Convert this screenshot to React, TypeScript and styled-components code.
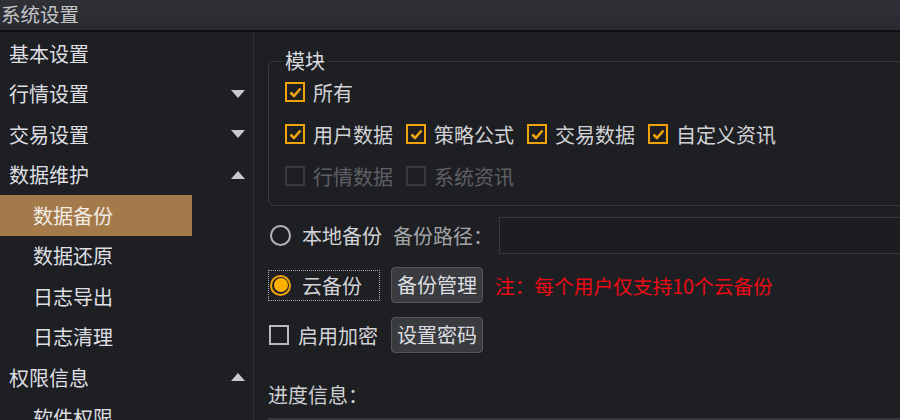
import styled, { createGlobalStyle } from 'styled-components';

const GlobalStyle = createGlobalStyle`
  html, body {
    margin: 0;
    padding: 0;
    background: #1e1f23;
  }
  * {
    box-sizing: border-box;
  }
`;

const FONT = `"Noto Sans CJK SC", "Noto Sans", sans-serif`;
const ORANGE = '#f0a30a';

interface NavItemProp {
  label: string,
  level: number,
  arrow?: 'up' | 'down',
  selected?: boolean
}

const navItems: NavItemProp[] = [
  { label: '基本设置', level: 1 },
  { label: '行情设置', level: 1, arrow: 'down' },
  { label: '交易设置', level: 1, arrow: 'down' },
  { label: '数据维护', level: 1, arrow: 'up' },
  { label: '数据备份', level: 2, selected: true },
  { label: '数据还原', level: 2 },
  { label: '日志导出', level: 2 },
  { label: '日志清理', level: 2 },
  { label: '权限信息', level: 1, arrow: 'up' },
  { label: '软件权限', level: 2 },
];

const Window = styled.div`
  width: 900px;
  height: 420px;
  overflow: hidden;
  display: flex;
  flex-direction: column;
  background: #1e1f23;
  font-family: ${FONT};
  font-size: 20px;
  color: #d6d7da;
`;

const TitleBar = styled.div`
  height: 32px;
  flex-shrink: 0;
  padding-left: 1px;
  display: flex;
  align-items: center;
  padding-bottom: 4px;
  background: linear-gradient(#303136, #2a2b30);
  border-bottom: 2px solid #0f1012;
  color: #c4c5c9;
  font-size: 19.5px;
`;

const Body = styled.div`
  flex: 1;
  display: flex;
  min-height: 0;
`;

const Sidebar = styled.div`
  width: 254px;
  flex-shrink: 0;
  padding-top: 1px;
  border-right: 1px solid #303136;
`;

const NavRow: any = styled.div`
  height: 40.5px;
  width: ${(props: any) => props.selected ? '192px' : '100%'};
  display: flex;
  align-items: center;
  justify-content: space-between;
  padding-left: ${(props: any) => props.level === 2 ? '33px' : '9px'};
  padding-right: 8px;
  background: ${(props: any) => props.selected ? '#a57a4b' : 'transparent'};
  color: ${(props: any) => props.selected ? '#f1ece4' : '#dedfe2'};
  white-space: nowrap;
`;

const Arrow: any = styled.span`
  width: 0;
  height: 0;
  border-left: 7.5px solid transparent;
  border-right: 7.5px solid transparent;
  ${(props: any) => props.dir === 'up'
    ? 'border-bottom: 8px solid #c9cacd;'
    : 'border-top: 8px solid #c9cacd;'}
`;

const Content = styled.div`
  flex: 1;
  padding-left: 14px;
  display: flex;
  flex-direction: column;
  min-width: 0;
`;

const Group = styled.fieldset`
  width: 700px;
  margin: 19px 0 0 0;
  padding: 0 0 8px 16px;
  border: 1px solid #38393e;
  border-radius: 6px;
`;

const Legend = styled.legend`
  padding: 0 3px;
  margin-left: -3px;
  line-height: 20px;
  color: #dcdde0;
`;

const CheckRow = styled.div`
  height: 42px;
  display: flex;
  align-items: center;
  gap: 13px;
`;

const CheckItem: any = styled.label`
  display: flex;
  align-items: center;
  gap: 8px;
  color: ${(props: any) => props.disabled ? '#5e6065' : '#d2d3d6'};
  white-space: nowrap;
`;

const Box: any = styled.span`
  width: 20px;
  height: 20px;
  flex-shrink: 0;
  display: flex;
  align-items: center;
  justify-content: center;
  border: 2px solid ${(props: any) => props.checked ? ORANGE : props.disabled ? '#38393d' : '#b9babd'};
`;

const Row: any = styled.div`
  height: ${(props: any) => props.h || 36}px;
  margin-top: ${(props: any) => props.mt || 0}px;
  display: flex;
  align-items: center;
  white-space: nowrap;
`;

const Lead: any = styled.div`
  width: 123px;
  flex-shrink: 0;
  display: flex;
  align-items: center;
  align-self: center;
  gap: ${(props: any) => props.gap || 11}px;
  padding-left: ${(props: any) => props.pl || 2}px;
  color: #d2d3d6;
`;

const FocusLead = styled(Lead)`
  width: 112px;
  height: 31px;
  margin-right: 11px;
  padding-left: 2px;
  outline: 1px dotted #a9aaad;
  outline-offset: -1px;
`;

const Radio: any = styled.span`
  width: 21px;
  height: 21px;
  flex-shrink: 0;
  border-radius: 50%;
  border: 2px solid ${(props: any) => props.checked ? ORANGE : '#b4b5b8'};
  padding: 1.5px;
  &::after {
    content: '';
    display: ${(props: any) => props.checked ? 'block' : 'none'};
    width: 100%;
    height: 100%;
    border-radius: 50%;
    background: #ffb000;
  }
`;

const Muted = styled.span`
  color: #a3a4a8;
  margin-left: 2px;
  width: 106px;
  flex-shrink: 0;
`;

const PathInput = styled.div`
  width: 420px;
  height: 37px;
  flex-shrink: 0;
  border: 1px solid #38393e;
  background: #1c1d21;
`;

const Button = styled.button`
  width: 92px;
  height: 36px;
  padding: 0 0 2px;
  font-family: ${FONT};
  font-size: 20px;
  color: #dcdde0;
  background: #3a3b3f;
  border: 1px solid #55565b;
  border-radius: 4px;
`;

const Note = styled.span`
  margin-left: 12px;
  color: #ee0a14;
  font-size: 19.7px;
`;

const Label = styled.div`
  margin-top: 31px;
  line-height: 22px;
  color: #cfd0d3;
`;

const LogBox = styled.div`
  margin-top: 12px;
  width: 700px;
  height: 80px;
  border: 1px solid #38393e;
`;

function Check({ label, checked, disabled }: { label: string, checked?: boolean, disabled?: boolean }) {
  return (
    <CheckItem disabled={disabled}>
      <Box checked={checked} disabled={disabled}>
        {checked &&
          <svg width="13" height="11" viewBox="0 0 13 11">
            <path d="M1.5 5.5 L5 9 L11.5 1.5" fill="none" stroke={ORANGE} strokeWidth="2.6" strokeLinejoin="round" />
          </svg>
        }
      </Box>
      {label}
    </CheckItem>
  );
}

function App() {
  return (
    <Window>
      <GlobalStyle />
      <TitleBar>系统设置</TitleBar>
      <Body>
        <Sidebar>
          {navItems.map((item, i) => (
            <NavRow key={i} level={item.level} selected={item.selected}>
              <span>{item.label}</span>
              {item.arrow && <Arrow dir={item.arrow} />}
            </NavRow>
          ))}
        </Sidebar>
        <Content>
          <Group>
            <Legend>模块</Legend>
            <CheckRow>
              <Check label="所有" checked />
            </CheckRow>
            <CheckRow>
              <Check label="用户数据" checked />
              <Check label="策略公式" checked />
              <Check label="交易数据" checked />
              <Check label="自定义资讯" checked />
            </CheckRow>
            <CheckRow>
              <Check label="行情数据" disabled />
              <Check label="系统资讯" disabled />
            </CheckRow>
          </Group>
          <Row h={37} mt={11}>
            <Lead>
              <Radio />
              本地备份
            </Lead>
            <Muted>备份路径：</Muted>
            <PathInput />
          </Row>
          <Row mt={13}>
            <FocusLead>
              <Radio checked />
              云备份
            </FocusLead>
            <Button>备份管理</Button>
            <Note>注：每个用户仅支持10个云备份</Note>
          </Row>
          <Row mt={14}>
            <Lead gap={9} pl={1}>
              <Box />
              启用加密
            </Lead>
            <Button>设置密码</Button>
          </Row>
          <Label>进度信息：</Label>
          <LogBox />
        </Content>
      </Body>
    </Window>
  );
}

export default App;
